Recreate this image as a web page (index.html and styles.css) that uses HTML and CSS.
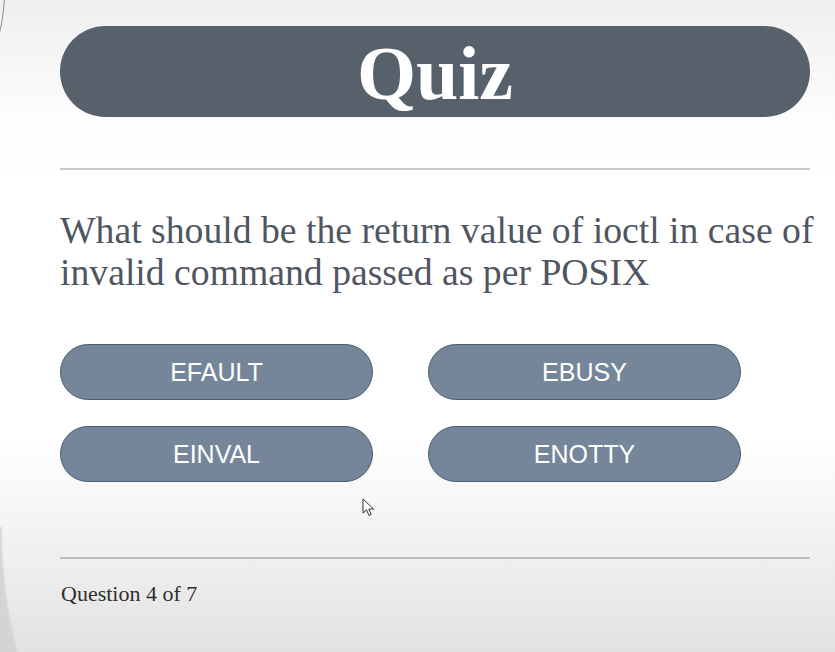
FILE: index.html
```html
<!DOCTYPE html>
<html lang="en">
<head>
<meta charset="utf-8">
<title>Quiz</title>
<link rel="stylesheet" href="styles.css">
</head>
<body>
<main class="quiz">
  <header class="quiz-header"><h1 class="quiz-title">Quiz</h1></header>
  <hr class="rule rule-top">
  <p class="question">What should be the return value of ioctl in case of invalid command passed as per POSIX</p>
  <div class="answers">
    <button class="answer">EFAULT</button>
    <button class="answer">EBUSY</button>
    <button class="answer">EINVAL</button>
    <button class="answer">ENOTTY</button>
  </div>
  <hr class="rule rule-bottom">
  <p class="progress">Question 4 of 7</p>
</main>
<svg class="cursor" width="14" height="20" viewBox="0 0 14 20" aria-hidden="true">
  <path d="M1 1 L1 15 L4.5 11.8 L7 17.5 L9.2 16.5 L6.8 11 L11.5 11 Z" fill="#fff" stroke="#333" stroke-width="1" stroke-linejoin="round"/>
</svg>
</body>
</html>
```
FILE: styles.css
```css
html, body {
  margin: 0;
  padding: 0;
}
body {
  width: 835px;
  height: 652px;
  overflow: hidden;
  position: relative;
  background: linear-gradient(to bottom, #efefef 0px, #fdfdfd 120px, #ffffff 180px, #ffffff 440px, #f3f3f3 530px, #e2e2e2 652px);
  font-family: "Liberation Serif", "Times New Roman", serif;
}
body::before {
  content: "";
  position: absolute;
  left: -60px;
  top: -88px;
  width: 64px;
  height: 157px;
  border-radius: 50%;
  border-right: 1.5px solid #707070;
  opacity: 0.8;
}
body::after {
  content: "";
  position: absolute;
  left: 0;
  bottom: 0;
  width: 40px;
  height: 125px;
  background: radial-gradient(ellipse 150px 280px at 150px 0, rgba(214,214,214,0) 98%, #d4d4d4 100%);
}
.quiz {
  padding: 26px 25px 0 60px;
  display: flex;
  flex-direction: column;
}
.quiz-header {
  width: 750px;
  height: 91px;
  border-radius: 46px;
  background: #56616c;
  display: flex;
  align-items: center;
  justify-content: center;
}
.quiz-title {
  margin: 0;
  color: #ffffff;
  font-size: 76px;
  font-weight: bold;
  line-height: 1;
  padding-top: 2px;
}
.rule {
  width: 750px;
  margin: 0;
  border: none;
  height: 2px;
  background: #c9c9c9;
}
.rule-top {
  margin-top: 51px;
}
.question {
  margin: 39px 0 0 0;
  width: 770px;
  font-size: 37.7px;
  line-height: 42px;
  color: #4f5661;
}
.answers {
  margin-top: 51px;
  display: grid;
  grid-template-columns: 313px 313px;
  column-gap: 55px;
  row-gap: 26px;
}
.answer {
  height: 56px;
  border-radius: 28px;
  border: 1px solid #4d5b70;
  background: #76869a;
  color: #ffffff;
  font-family: "Liberation Sans", Arial, sans-serif;
  font-size: 25px;
  padding: 0;
}
.rule-bottom {
  margin-top: 75px;
  background: #bdbdbd;
}
.progress {
  margin: 22px 0 0 1px;
  font-size: 22px;
  color: #2e2e2e;
}
.cursor {
  position: absolute;
  left: 362px;
  top: 498px;
}
```
